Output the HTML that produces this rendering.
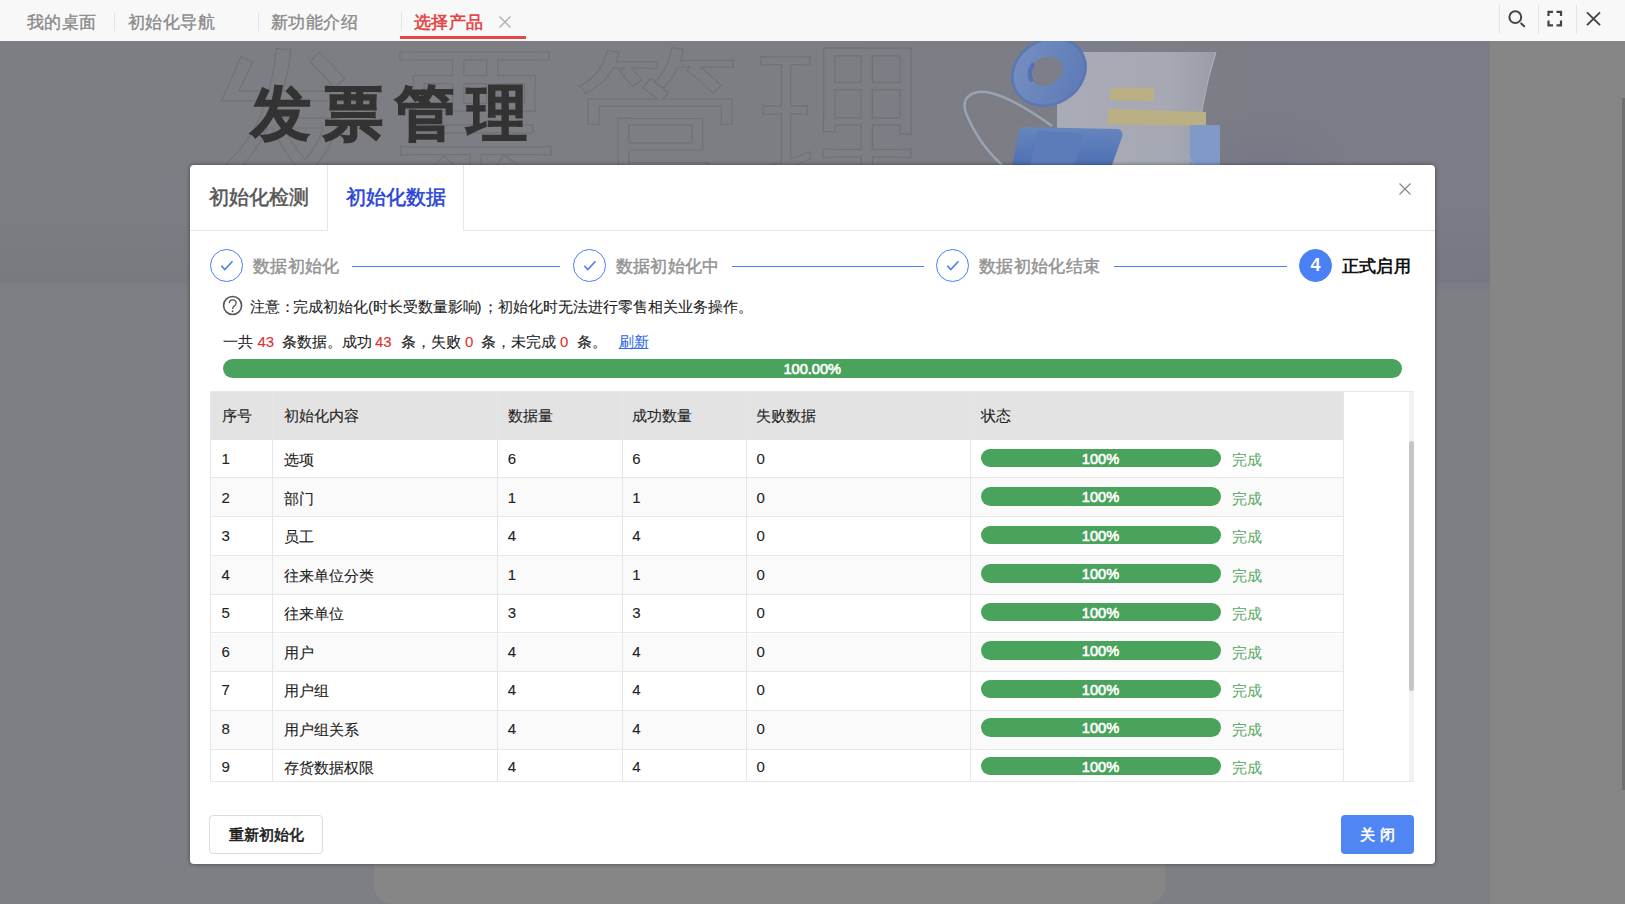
<!DOCTYPE html>
<html><head><meta charset="utf-8">
<style>
*{box-sizing:border-box;margin:0;padding:0}
html,body{width:1625px;height:904px;overflow:hidden}
body{font-family:"Liberation Sans",sans-serif;-webkit-text-stroke:0.25px currentColor;background:#7e7f84;position:relative;color:#222}
.abs{position:absolute}
#topbar{left:0;top:0;width:1625px;height:41px;background:#f8f8f9}
.ttab{position:absolute;top:11.5px;font-size:17px;letter-spacing:0.45px;-webkit-text-stroke:0.35px currentColor;line-height:22px;color:#8a8a8a;white-space:nowrap}
.tsep{position:absolute;top:12px;width:1px;height:19px;background:#e1e4ec}
#bg{left:0;top:41px;width:1625px;height:863px;overflow:hidden;background:#7e7f84}
#dialog{left:190px;top:165px;width:1245px;height:699px;background:#fff;border-radius:4px;box-shadow:0 0 4px rgba(0,0,0,.45)}
.dtab{position:absolute;top:184.5px;font-size:20px;line-height:24px;white-space:nowrap;-webkit-text-stroke:0.5px currentColor}
.scirc{position:absolute;top:249.2px;width:33px;height:33px;border:1px solid #4a7ef5;border-radius:50%}
.scirc svg{position:absolute;left:-0.5px;top:-0.5px}
.stxt{position:absolute;top:255.5px;font-size:17px;letter-spacing:0.35px;line-height:22px;color:#939393;white-space:nowrap;-webkit-text-stroke:0.45px currentColor}
.sline{position:absolute;top:266px;height:1px;background:#4a7ef5}
.note{position:absolute;font-size:15px;line-height:20px;color:#222;white-space:nowrap;-webkit-text-stroke:0.1px currentColor}
.red{color:#e03030}
.link{color:#2f6ae8;text-decoration:underline}
#tbl{left:210px;top:391px;width:1204px;height:391px;overflow:hidden;background:#fff}
.thead{position:absolute;left:0;top:1px;width:1133px;height:48px;background:#e3e3e3}
.hcell,.cell{position:absolute;font-size:15px;line-height:20px;color:#222;white-space:nowrap;-webkit-text-stroke:0.1px #222}
.hcell{top:14px}
.row{position:absolute;left:0;width:1133px;height:38.8px;border-bottom:1px solid #e8e8e8}
.cell{}
.vline{position:absolute;top:0;width:1px;height:391px;background:#e6e6e6}
.pbar{position:absolute;left:770.5px;width:240px;height:18.5px;border-radius:9.5px;background:#4aa35c;color:#fff;font-size:14.6px;font-weight:normal;-webkit-text-stroke:0.6px #fff;text-align:center;line-height:21px}
.done{position:absolute;left:1022px;font-size:15px;line-height:20px;color:#55a763;-webkit-text-stroke:0}
.btn{position:absolute;top:815px;height:39px;border-radius:4px;font-size:15px;line-height:37px;text-align:center;white-space:nowrap}
</style></head><body>
<div id="bg" class="abs">
  <div class="abs" style="left:0;top:0;width:1490px;height:250px;background:radial-gradient(ellipse 90px 60px at 1265px 125px,rgba(90,100,140,0.18),rgba(90,100,140,0) 100%),linear-gradient(90deg,#7d7e83 0%,#7d7e84 55%,#7c7d85 75%,#7b7c86 100%)"></div>
  <div class="abs" style="left:0;top:160px;width:1490px;height:82px;background:linear-gradient(180deg,rgba(0,0,0,0) 0%,rgba(0,0,0,0.035) 100%)"></div>
  <div class="abs" style="left:1490px;top:0;width:135px;height:863px;background:#868686"></div>
  <div class="abs" style="left:1622px;top:57px;width:3px;height:692px;background:#6f6f6f"></div>
  <div class="abs" style="left:374px;top:780px;width:791px;height:83px;background:#868686;border-radius:18px"></div>
  <svg class="abs" style="left:0;top:0" width="1490" height="250">
    <g fill="none" stroke="rgba(30,30,40,0.13)" stroke-width="1.2" font-family="Liberation Sans" font-size="168">
      <text x="207" y="141">发</text><text x="390" y="141">票</text><text x="575" y="141">管</text><text x="760" y="141">理</text>
    </g>
    <!-- illustration (coords page y-41) -->
    <defs>
      <linearGradient id="pap" x1="0" y1="0" x2="1" y2="0"><stop offset="0" stop-color="#a9acb6"/><stop offset="0.7" stop-color="#a6a9b3"/><stop offset="1" stop-color="#9a9ca8"/></linearGradient>
      <linearGradient id="tor" x1="0" y1="0" x2="1" y2="1"><stop offset="0" stop-color="#7891c2"/><stop offset="1" stop-color="#5a78b6"/></linearGradient>
      <linearGradient id="blk" x1="0" y1="0" x2="0" y2="1"><stop offset="0" stop-color="#6686be"/><stop offset="1" stop-color="#4f70b3"/></linearGradient>
    </defs>
    <rect x="1078" y="0" width="48" height="11" fill="#7d7e8b"/>
    <path d="M1057 11 L1216 11 Q1200 60 1196 124 L1057 124 Z" fill="url(#pap)"/>
    <path d="M1216 11 Q1200 60 1196 124" fill="none" stroke="#b0b3bd" stroke-width="1"/>
    <path d="M1052 85 Q1000 48 978 51 Q960 55 966 72 Q978 102 1002 124" fill="none" stroke="#97a4b6" stroke-width="2.5"/>
    <g transform="rotate(-30 1049 31)">
      <ellipse cx="1049" cy="31" rx="38" ry="32" fill="url(#tor)"/>
      <ellipse cx="1049" cy="31" rx="38" ry="32" fill="none" stroke="#5a76b4" stroke-width="2.5"/>
      <ellipse cx="1047" cy="29" rx="17" ry="14" fill="#7c7e89"/>
      <path d="M1030 31 A17 14 0 0 1 1040 16" fill="none" stroke="#5471b4" stroke-width="4"/>
    </g>
    <path d="M1110 47 L1154 47 L1154 60 L1110 59 Z" fill="#bbb084"/>
    <path d="M1108 68 L1206 71 L1206 85 L1108 83 Z" fill="#bbb084"/>
    <path d="M1020 86 L1118 88 Q1124 90 1122 96 L1112 124 L1012 124 Z" fill="url(#blk)"/>
    <path d="M1038 90 L1080 92 Q1084 95 1082 100 L1074 124 L1030 124 Z" fill="#5c7bb8"/>
    <rect x="1190" y="84" width="30" height="40" fill="#8199c6"/>
    <circle cx="1166" cy="135" r="30" fill="none" stroke="#a0aabb" stroke-width="1"/>
  </svg>
  <div class="abs" style="left:250.5px;top:37.5px;font-size:60px;font-weight:bold;color:#333;letter-spacing:12.3px;line-height:70px;-webkit-text-stroke:1.5px #333">发票管理</div>
</div>
<div id="topbar" class="abs">
  <div class="ttab" style="left:27px">我的桌面</div>
  <div class="tsep" style="left:114px"></div>
  <div class="ttab" style="left:128px">初始化导航</div>
  <div class="tsep" style="left:258px"></div>
  <div class="ttab" style="left:271px">新功能介绍</div>
  <div class="tsep" style="left:401px"></div>
  <div class="ttab" style="left:414px;color:#e43f3f;-webkit-text-stroke:0.55px #e43f3f">选择产品</div>
  <div class="abs" style="left:400px;top:36px;width:126px;height:3px;background:#e84545"></div>
  <svg class="abs" style="left:497px;top:14px" width="16" height="16"><path d="M2.5 2.5L13.5 13.5M13.5 2.5L2.5 13.5" stroke="#b0b0b0" stroke-width="1.4"/></svg>
  <div class="tsep" style="left:1499px;top:5px;height:29px"></div>
  <div class="tsep" style="left:1538px;top:5px;height:29px"></div>
  <div class="tsep" style="left:1576px;top:5px;height:29px"></div>
  <svg class="abs" style="left:1500px;top:2px" width="125" height="36">
    <circle cx="15.3" cy="15.2" r="5.9" fill="none" stroke="#444" stroke-width="2"/>
    <path d="M21.2 21.4L24.2 24.2" stroke="#444" stroke-width="2" stroke-linecap="round"/>
    <path d="M48.5 14V9.8H53M56.5 9.8H61V14M61 18.5V23.3H56.5M53 23.3H48.5V18.5" fill="none" stroke="#444" stroke-width="2.2"/>
    <path d="M87 10.3L100 23.2M100 10.3L87 23.2" stroke="#444" stroke-width="1.9"/>
  </svg>
</div>
<div id="dialog" class="abs"></div>
<div class="abs" style="left:190px;top:229.5px;width:1245px;height:1px;background:#e6e6e6"></div>
<div class="abs" style="left:327px;top:165px;width:137px;height:65.5px;background:#fff;border-left:1px solid #e6e6e6;border-right:1px solid #e6e6e6"></div>
<div class="dtab" style="left:209px;color:#555">初始化检测</div>
<div class="dtab" style="left:346px;color:#2843d6">初始化数据</div>
<svg class="abs" style="left:1398px;top:182px" width="14" height="14"><path d="M1.5 1.5L12.5 12.5M12.5 1.5L1.5 12.5" stroke="#8a8a8a" stroke-width="1.3"/></svg>
<!-- steps -->
<div class="scirc" style="left:210px"><svg width="32" height="32"><path d="M10.3 15.8L13.8 19.5L21.5 11.2" fill="none" stroke="#4a7ef5" stroke-width="1.6"/></svg></div>
<div class="stxt" style="left:253px">数据初始化</div>
<div class="sline" style="left:352px;width:208px"></div>
<div class="scirc" style="left:573px"><svg width="32" height="32"><path d="M10.3 15.8L13.8 19.5L21.5 11.2" fill="none" stroke="#4a7ef5" stroke-width="1.6"/></svg></div>
<div class="stxt" style="left:615.5px">数据初始化中</div>
<div class="sline" style="left:732px;width:192px"></div>
<div class="scirc" style="left:936px"><svg width="32" height="32"><path d="M10.3 15.8L13.8 19.5L21.5 11.2" fill="none" stroke="#4a7ef5" stroke-width="1.6"/></svg></div>
<div class="stxt" style="left:979px">数据初始化结束</div>
<div class="sline" style="left:1113.5px;width:173px"></div>
<div class="scirc" style="left:1299px;background:#4a80f5;border-color:#4a80f5;color:#fff;font-size:18px;font-weight:bold;-webkit-text-stroke:0;text-align:center;line-height:31.5px">4</div>
<div class="stxt" style="left:1341.5px;color:#111;font-weight:bold;-webkit-text-stroke:0">正式启用</div>
<!-- note -->
<svg class="abs" style="left:222px;top:295px" width="22" height="22"><circle cx="10.6" cy="10.5" r="9" fill="none" stroke="#555" stroke-width="1.6"/><path d="M7.3 8.2Q7.3 4.9 10.6 4.9Q14.1 4.9 14.1 8Q14.1 9.9 12.1 11.1Q10.6 12 10.6 13.9" fill="none" stroke="#555" stroke-width="1.3"/><circle cx="10.6" cy="16.2" r="0.95" fill="#555"/></svg>
<span class="note" style="left:249.5px;top:296.5px">注意：</span>
<span class="note" style="left:293.4px;top:296.5px">完成初始化</span>
<span class="note" style="left:368.0px;top:296.5px">(</span>
<span class="note" style="left:372.7px;top:296.5px">时长受数量影响</span>
<span class="note" style="left:476.5px;top:296.5px">)</span>
<span class="note" style="left:483px;top:296.5px">；</span>
<span class="note" style="left:498.4px;top:296.5px">初始化时无法进行零售相关业务操作。</span>
<span class="note" style="left:223.3px;top:331.5px">一共</span>
<span class="note red" style="left:257.5px;top:331.5px">43</span>
<span class="note" style="left:282px;top:331.5px">条数据。成功</span>
<span class="note red" style="left:375px;top:331.5px">43</span>
<span class="note" style="left:400.5px;top:331.5px">条，失败</span>
<span class="note red" style="left:465px;top:331.5px">0</span>
<span class="note" style="left:480.8px;top:331.5px">条，未完成</span>
<span class="note red" style="left:560px;top:331.5px">0</span>
<span class="note" style="left:577px;top:331.5px">条。</span>
<span class="note link" style="left:618.5px;top:331.5px">刷新</span>
<div class="abs" style="left:222.5px;top:358.5px;width:1179.5px;height:19px;border-radius:10px;background:#4aa35c;color:#fff;font-size:14.6px;font-weight:normal;-webkit-text-stroke:0.6px #fff;text-align:center;line-height:20px">100.00%</div>
<!-- table -->
<div id="tbl" class="abs">
<div class="thead"><span class="hcell" style="left:11.6px">序号</span><span class="hcell" style="left:73.5px">初始化内容</span><span class="hcell" style="left:297.7px">数据量</span><span class="hcell" style="left:422.3px">成功数量</span><span class="hcell" style="left:546.4px">失败数据</span><span class="hcell" style="left:770.8px">状态</span></div>
<div class="row" style="top:48.50px;background:#fff"></div>
<div class="row" style="top:87.30px;background:#fafafa"></div>
<div class="row" style="top:126.10px;background:#fff"></div>
<div class="row" style="top:164.90px;background:#fafafa"></div>
<div class="row" style="top:203.70px;background:#fff"></div>
<div class="row" style="top:242.50px;background:#fafafa"></div>
<div class="row" style="top:281.30px;background:#fff"></div>
<div class="row" style="top:320.10px;background:#fafafa"></div>
<div class="row" style="top:358.90px;background:#fff"></div>
<span class="cell" style="left:11.6px;top:58.00px">1</span>
<span class="cell" style="left:73.5px;top:59.00px">选项</span>
<span class="cell" style="left:297.7px;top:58.00px">6</span>
<span class="cell" style="left:422.3px;top:58.00px">6</span>
<span class="cell" style="left:546.4px;top:58.00px">0</span>
<div class="pbar" style="top:57.50px">100%</div><span class="done" style="top:59.00px">完成</span>
<span class="cell" style="left:11.6px;top:96.55px">2</span>
<span class="cell" style="left:73.5px;top:97.55px">部门</span>
<span class="cell" style="left:297.7px;top:96.55px">1</span>
<span class="cell" style="left:422.3px;top:96.55px">1</span>
<span class="cell" style="left:546.4px;top:96.55px">0</span>
<div class="pbar" style="top:96.05px">100%</div><span class="done" style="top:97.55px">完成</span>
<span class="cell" style="left:11.6px;top:135.10px">3</span>
<span class="cell" style="left:73.5px;top:136.10px">员工</span>
<span class="cell" style="left:297.7px;top:135.10px">4</span>
<span class="cell" style="left:422.3px;top:135.10px">4</span>
<span class="cell" style="left:546.4px;top:135.10px">0</span>
<div class="pbar" style="top:134.60px">100%</div><span class="done" style="top:136.10px">完成</span>
<span class="cell" style="left:11.6px;top:173.65px">4</span>
<span class="cell" style="left:73.5px;top:174.65px">往来单位分类</span>
<span class="cell" style="left:297.7px;top:173.65px">1</span>
<span class="cell" style="left:422.3px;top:173.65px">1</span>
<span class="cell" style="left:546.4px;top:173.65px">0</span>
<div class="pbar" style="top:173.15px">100%</div><span class="done" style="top:174.65px">完成</span>
<span class="cell" style="left:11.6px;top:212.20px">5</span>
<span class="cell" style="left:73.5px;top:213.20px">往来单位</span>
<span class="cell" style="left:297.7px;top:212.20px">3</span>
<span class="cell" style="left:422.3px;top:212.20px">3</span>
<span class="cell" style="left:546.4px;top:212.20px">0</span>
<div class="pbar" style="top:211.70px">100%</div><span class="done" style="top:213.20px">完成</span>
<span class="cell" style="left:11.6px;top:250.75px">6</span>
<span class="cell" style="left:73.5px;top:251.75px">用户</span>
<span class="cell" style="left:297.7px;top:250.75px">4</span>
<span class="cell" style="left:422.3px;top:250.75px">4</span>
<span class="cell" style="left:546.4px;top:250.75px">0</span>
<div class="pbar" style="top:250.25px">100%</div><span class="done" style="top:251.75px">完成</span>
<span class="cell" style="left:11.6px;top:289.30px">7</span>
<span class="cell" style="left:73.5px;top:290.30px">用户组</span>
<span class="cell" style="left:297.7px;top:289.30px">4</span>
<span class="cell" style="left:422.3px;top:289.30px">4</span>
<span class="cell" style="left:546.4px;top:289.30px">0</span>
<div class="pbar" style="top:288.80px">100%</div><span class="done" style="top:290.30px">完成</span>
<span class="cell" style="left:11.6px;top:327.85px">8</span>
<span class="cell" style="left:73.5px;top:328.85px">用户组关系</span>
<span class="cell" style="left:297.7px;top:327.85px">4</span>
<span class="cell" style="left:422.3px;top:327.85px">4</span>
<span class="cell" style="left:546.4px;top:327.85px">0</span>
<div class="pbar" style="top:327.35px">100%</div><span class="done" style="top:328.85px">完成</span>
<span class="cell" style="left:11.6px;top:366.40px">9</span>
<span class="cell" style="left:73.5px;top:367.40px">存货数据权限</span>
<span class="cell" style="left:297.7px;top:366.40px">4</span>
<span class="cell" style="left:422.3px;top:366.40px">4</span>
<span class="cell" style="left:546.4px;top:366.40px">0</span>
<div class="pbar" style="top:365.90px">100%</div><span class="done" style="top:367.40px">完成</span>
<div class="vline" style="left:0.0px"></div>
<div class="vline" style="left:62.0px"></div>
<div class="vline" style="left:287.0px"></div>
<div class="vline" style="left:411.8px"></div>
<div class="vline" style="left:535.8px"></div>
<div class="vline" style="left:760.3px"></div>
<div class="vline" style="left:1133.0px"></div>
<div class="abs" style="left:0;top:0;width:1204px;height:1px;background:#e8e8e8"></div>
<div class="abs" style="left:0;top:390px;width:1204px;height:1px;background:#e8e8e8"></div>
<div class="abs" style="left:1199px;top:1px;width:5px;height:389px;background:#f1f1f1"></div>
<div class="abs" style="left:1199px;top:50px;width:5px;height:250px;background:#c6c6c6;border-radius:2.5px"></div>
</div>
<!-- /table -->
<div class="btn" style="left:209px;width:114px;border:1px solid #dcdcdc;background:#fff;color:#1a1a1a;-webkit-text-stroke:0.55px #1a1a1a">重新初始化</div>
<div class="btn" style="left:1341px;width:73px;background:#4f86f4;color:#fff;-webkit-text-stroke:0.6px #fff;letter-spacing:5px;padding-left:5px;line-height:40px">关闭</div>

</body></html>
